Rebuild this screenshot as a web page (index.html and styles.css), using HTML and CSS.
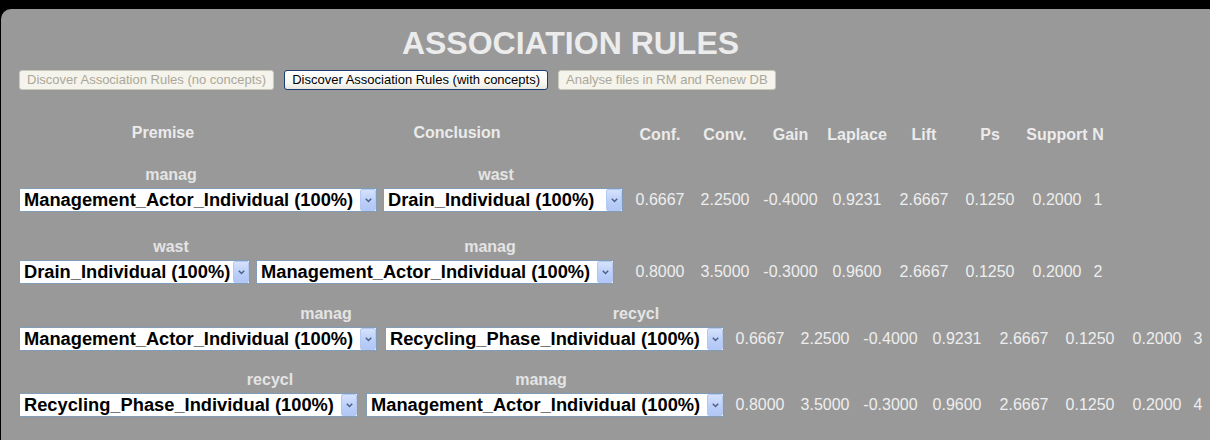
FILE: index.html
```html
<!DOCTYPE html>
<html>
<head>
<meta charset="utf-8">
<title>Association Rules</title>
<link rel="stylesheet" href="styles.css">
</head>
<body>
<div class="panel">
  <h1 class="title">ASSOCIATION RULES</h1>
  <div class="actions">
    <button class="btn" disabled>Discover Association Rules (no concepts)</button>
    <button class="btn btn-active">Discover Association Rules (with concepts)</button>
    <button class="btn" disabled>Analyse files in RM and Renew DB</button>
  </div>

  <div class="head">
    <div class="pair pair-a">
      <div class="h-premise">Premise</div>
      <div class="h-conclusion">Conclusion</div>
    </div>
    <div class="c c1 nh">Conf.</div>
    <div class="c c2 nh">Conv.</div>
    <div class="c c3 nh">Gain</div>
    <div class="c c4 nh">Laplace</div>
    <div class="c c5 nh">Lift</div>
    <div class="c c6 nh">Ps</div>
    <div class="c c7 nh">Support</div>
    <div class="c c8 nh">N</div>
  </div>

  <div class="rule r1">
    <div class="labels"><span class="lbl la">manag</span><span class="lbl lb">wast</span></div>
    <div class="line">
      <div class="pair pair-a">
        <div class="sel w-mgmt"><span class="sel-text">Management_Actor_Individual (100%)</span><span class="sel-btn"><svg width="7" height="5" viewBox="0 0 7 5"><path d="M0.8 0.8 L3.5 3.6 L6.2 0.8" fill="none" stroke="#4a5f86" stroke-width="1.4"/></svg></span></div>
        <div class="sel w-drain1"><span class="sel-text">Drain_Individual (100%)</span><span class="sel-btn"><svg width="7" height="5" viewBox="0 0 7 5"><path d="M0.8 0.8 L3.5 3.6 L6.2 0.8" fill="none" stroke="#4a5f86" stroke-width="1.4"/></svg></span></div>
      </div>
      <div class="c c1">0.6667</div>
      <div class="c c2">2.2500</div>
      <div class="c c3">-0.4000</div>
      <div class="c c4">0.9231</div>
      <div class="c c5">2.6667</div>
      <div class="c c6">0.1250</div>
      <div class="c c7">0.2000</div>
      <div class="c c8">1</div>
    </div>
  </div>

  <div class="rule r2">
    <div class="labels"><span class="lbl la">wast</span><span class="lbl lb">manag</span></div>
    <div class="line">
      <div class="pair pair-a">
        <div class="sel w-drain2"><span class="sel-text">Drain_Individual (100%)</span><span class="sel-btn"><svg width="7" height="5" viewBox="0 0 7 5"><path d="M0.8 0.8 L3.5 3.6 L6.2 0.8" fill="none" stroke="#4a5f86" stroke-width="1.4"/></svg></span></div>
        <div class="sel w-mgmt"><span class="sel-text">Management_Actor_Individual (100%)</span><span class="sel-btn"><svg width="7" height="5" viewBox="0 0 7 5"><path d="M0.8 0.8 L3.5 3.6 L6.2 0.8" fill="none" stroke="#4a5f86" stroke-width="1.4"/></svg></span></div>
      </div>
      <div class="c c1">0.8000</div>
      <div class="c c2">3.5000</div>
      <div class="c c3">-0.3000</div>
      <div class="c c4">0.9600</div>
      <div class="c c5">2.6667</div>
      <div class="c c6">0.1250</div>
      <div class="c c7">0.2000</div>
      <div class="c c8">2</div>
    </div>
  </div>

  <div class="rule r3">
    <div class="labels"><span class="lbl la">manag</span><span class="lbl lb">recycl</span></div>
    <div class="line">
      <div class="pair pair-b">
        <div class="sel w-mgmt"><span class="sel-text">Management_Actor_Individual (100%)</span><span class="sel-btn"><svg width="7" height="5" viewBox="0 0 7 5"><path d="M0.8 0.8 L3.5 3.6 L6.2 0.8" fill="none" stroke="#4a5f86" stroke-width="1.4"/></svg></span></div>
        <div class="sel w-recy"><span class="sel-text">Recycling_Phase_Individual (100%)</span><span class="sel-btn"><svg width="7" height="5" viewBox="0 0 7 5"><path d="M0.8 0.8 L3.5 3.6 L6.2 0.8" fill="none" stroke="#4a5f86" stroke-width="1.4"/></svg></span></div>
      </div>
      <div class="c c1">0.6667</div>
      <div class="c c2">2.2500</div>
      <div class="c c3">-0.4000</div>
      <div class="c c4">0.9231</div>
      <div class="c c5">2.6667</div>
      <div class="c c6">0.1250</div>
      <div class="c c7">0.2000</div>
      <div class="c c8">3</div>
    </div>
  </div>

  <div class="rule r4">
    <div class="labels"><span class="lbl la">recycl</span><span class="lbl lb">manag</span></div>
    <div class="line">
      <div class="pair pair-b">
        <div class="sel w-recy"><span class="sel-text">Recycling_Phase_Individual (100%)</span><span class="sel-btn"><svg width="7" height="5" viewBox="0 0 7 5"><path d="M0.8 0.8 L3.5 3.6 L6.2 0.8" fill="none" stroke="#4a5f86" stroke-width="1.4"/></svg></span></div>
        <div class="sel w-mgmt"><span class="sel-text">Management_Actor_Individual (100%)</span><span class="sel-btn"><svg width="7" height="5" viewBox="0 0 7 5"><path d="M0.8 0.8 L3.5 3.6 L6.2 0.8" fill="none" stroke="#4a5f86" stroke-width="1.4"/></svg></span></div>
      </div>
      <div class="c c1">0.8000</div>
      <div class="c c2">3.5000</div>
      <div class="c c3">-0.3000</div>
      <div class="c c4">0.9600</div>
      <div class="c c5">2.6667</div>
      <div class="c c6">0.1250</div>
      <div class="c c7">0.2000</div>
      <div class="c c8">4</div>
    </div>
  </div>
</div>
</body>
</html>
```

FILE: styles.css
```css
html, body {
  margin: 0;
  padding: 0;
  background: #000;
  height: 100%;
  overflow: hidden;
}

body {
  font-family: "Liberation Sans", Arial, sans-serif;
  color: #ebebeb;
}

.panel {
  margin: 9px 0 0 1px;
  background: #999999;
  border-top-left-radius: 10px;
  min-height: 440px;
  padding: 18px 0 0 18px;
  box-sizing: border-box;
}

.title {
  width: 1103px;
  margin: 0;
  font-size: 32px;
  line-height: 32px;
  font-weight: bold;
  text-align: center;
  color: #ececec;
  white-space: nowrap;
}

.actions {
  display: flex;
  gap: 10px;
  margin-top: 11px;
}

.btn {
  box-sizing: border-box;
  height: 20px;
  padding: 0 7px;
  font-family: "Liberation Sans", Arial, sans-serif;
  font-size: 13px;
  line-height: 16px;
  white-space: nowrap;
  border: 1px solid #cac8bb;
  border-radius: 3px;
  background: #f4f3ec;
  color: #aca899;
}

.btn-active {
  border-color: #1d3d72;
  background: linear-gradient(#ffffff, #f6f6f2 70%, #e8e7df);
  color: #000;
}

.head {
  display: flex;
  margin-top: 35px;
  height: 16px;
  font-size: 16px;
  line-height: 16px;
  font-weight: bold;
  white-space: nowrap;
}

.h-premise {
  width: 288px;
  text-align: center;
}

.h-conclusion {
  width: 300px;
  text-align: center;
}

.nh {
  padding-top: 2px;
  line-height: 16px;
}

.pair {
  display: flex;
  flex: none;
}

.pair-a { width: 608px; }
.pair-b { width: 708px; }

.rule { white-space: nowrap; }
.r1 { margin-top: 26px; }
.r2 { margin-top: 27px; }
.r3 { margin-top: 22px; }
.r4 { margin-top: 21px; }

.labels {
  display: flex;
  height: 16px;
  font-size: 16px;
  line-height: 16px;
  font-weight: bold;
  color: #e4e4e4;
  margin-bottom: 5px;
}

.lbl {
  width: 60px;
  text-align: center;
  flex: none;
}

.r1 .la { margin-left: 122px; }
.r1 .lb { margin-left: 265px; }
.r2 .la { margin-left: 122px; }
.r2 .lb { margin-left: 259px; }
.r3 .la { margin-left: 277px; }
.r3 .lb { margin-left: 250px; }
.r4 .la { margin-left: 221px; }
.r4 .lb { margin-left: 211px; }

.line {
  display: flex;
  align-items: center;
  height: 24px;
}

.sel {
  box-sizing: border-box;
  height: 24px;
  display: flex;
  flex: none;
  border: 1px solid #7f9db9;
  background: #fff;
  color: #000;
}

.r1 .sel + .sel { margin-left: 6px; }
.r2 .sel + .sel { margin-left: 6px; }
.r3 .sel + .sel,
.r4 .sel + .sel { margin-left: 8px; }

.w-mgmt { width: 358px; }
.w-drain1 { width: 240px; }
.w-drain2 { width: 231px; }
.w-recy { width: 339px; }

.sel-text {
  flex: 1;
  padding-left: 4px;
  font-size: 18.3px;
  line-height: 22px;
  font-weight: bold;
  overflow: hidden;
}

.sel-btn {
  box-sizing: border-box;
  width: 16px;
  height: 22px;
  display: flex;
  align-items: center;
  justify-content: center;
  border: 1px solid #b5c8f2;
  border-radius: 2px;
  background: linear-gradient(#d6e2fc, #bccff8 55%, #b2c7f6);
}

.c {
  flex: none;
  text-align: center;
  font-size: 16px;
  line-height: 24px;
  color: #eeeeee;
}

.head .c { line-height: 16px; color: #ebebeb; }

.c1 { width: 66px; }
.c2 { width: 64px; }
.c3 { width: 67px; }
.c4 { width: 66px; }
.c5 { width: 68px; }
.c6 { width: 64px; }
.c7 { width: 70px; }
.c8 { width: 12px; }
```
